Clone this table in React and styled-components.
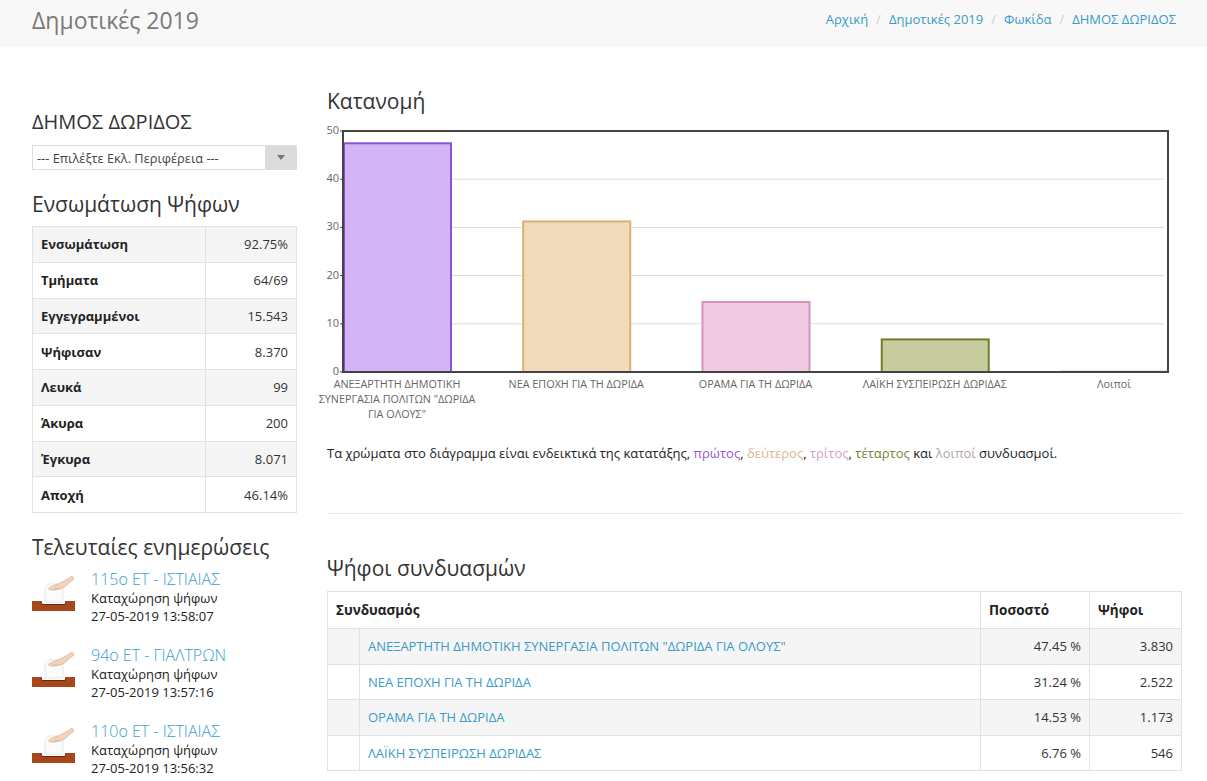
import React from 'react';
import styled, { createGlobalStyle } from 'styled-components';

//////// DATA ////////

const stats = [
  ['Ενσωμάτωση', '92.75%'],
  ['Τμήματα', '64/69'],
  ['Εγγεγραμμένοι', '15.543'],
  ['Ψήφισαν', '8.370'],
  ['Λευκά', '99'],
  ['Άκυρα', '200'],
  ['Έγκυρα', '8.071'],
  ['Αποχή', '46.14%'],
];

const updates = [
  { title: '115ο ΕΤ - ΙΣΤΙΑΙΑΣ', date: '27-05-2019 13:58:07' },
  { title: '94ο ΕΤ - ΓΙΑΛΤΡΩΝ', date: '27-05-2019 13:57:16' },
  { title: '110ο ΕΤ - ΙΣΤΙΑΙΑΣ', date: '27-05-2019 13:56:32' },
];

const parties = [
  { name: 'ΑΝΕΞΑΡΤΗΤΗ ΔΗΜΟΤΙΚΗ ΣΥΝΕΡΓΑΣΙΑ ΠΟΛΙΤΩΝ "ΔΩΡΙΔΑ ΓΙΑ ΟΛΟΥΣ"', pct: 47.45, votes: '3.830' },
  { name: 'ΝΕΑ ΕΠΟΧΗ ΓΙΑ ΤΗ ΔΩΡΙΔΑ', pct: 31.24, votes: '2.522' },
  { name: 'ΟΡΑΜΑ ΓΙΑ ΤΗ ΔΩΡΙΔΑ', pct: 14.53, votes: '1.173' },
  { name: 'ΛΑΪΚΗ ΣΥΣΠΕΙΡΩΣΗ ΔΩΡΙΔΑΣ', pct: 6.76, votes: '546' },
];

const bars = [
  { lines: ['ΑΝΕΞΑΡΤΗΤΗ ΔΗΜΟΤΙΚΗ', 'ΣΥΝΕΡΓΑΣΙΑ ΠΟΛΙΤΩΝ "ΔΩΡΙΔΑ', 'ΓΙΑ ΟΛΟΥΣ"'], value: 47.45, fill: '#d3b4f6', stroke: '#8e52d0' },
  { lines: ['ΝΕΑ ΕΠΟΧΗ ΓΙΑ ΤΗ ΔΩΡΙΔΑ'], value: 31.24, fill: '#f1dbbb', stroke: '#d9b078' },
  { lines: ['ΟΡΑΜΑ ΓΙΑ ΤΗ ΔΩΡΙΔΑ'], value: 14.53, fill: '#f0cbe2', stroke: '#d592bb' },
  { lines: ['ΛΑΪΚΗ ΣΥΣΠΕΙΡΩΣΗ ΔΩΡΙΔΑΣ'], value: 6.76, fill: '#c7cc9f', stroke: '#737c2c' },
  { lines: ['Λοιποί'], value: 0.05, fill: '#dddddd', stroke: '#999999' },
];

//////// CHART ////////

const PLOT_LEFT = 16;
const PLOT_RIGHT = 841;
const PLOT_TOP = 11;
const PLOT_BOTTOM = 252;
const UNIT = (PLOT_BOTTOM - PLOT_TOP) / 50;
const BAR_W = 108;
const BAR_STEP = 179.25;

const BarChart = () => (
  <ChartSvg width="855" height="310" viewBox="0 0 855 310">
    {[10, 20, 30, 40].map((v) => (
      <line key={v} x1={PLOT_LEFT} x2={PLOT_RIGHT - 4} y1={PLOT_BOTTOM - v * UNIT} y2={PLOT_BOTTOM - v * UNIT} stroke="#dcdcdc" strokeWidth="1" />
    ))}
    {[0, 10, 20, 30, 40, 50].map((v) => (
      <g key={v}>
        <text x="12" y={PLOT_BOTTOM - v * UNIT + 3} textAnchor="end" fontSize="11" fill="#666">{v}</text>
        <line x1="13" x2={PLOT_LEFT} y1={PLOT_BOTTOM - v * UNIT} y2={PLOT_BOTTOM - v * UNIT} stroke="#444" strokeWidth="1" />
      </g>
    ))}
    {bars.map((b, i) => {
      const x = PLOT_LEFT + i * BAR_STEP;
      const h = b.value * UNIT;
      return (
        <g key={i}>
          <rect x={x + 1} y={PLOT_BOTTOM - h} width={BAR_W - 1} height={h} fill={b.fill} stroke={b.stroke} strokeWidth="2" />
          {b.lines.map((line, j) => (
            <text key={j} x={x + BAR_W / 2} y={PLOT_BOTTOM + 16 + j * 15} textAnchor="middle" fontSize="10.8" fill="#666">{line}</text>
          ))}
        </g>
      );
    })}
    <rect x={PLOT_LEFT} y={PLOT_TOP} width={PLOT_RIGHT - PLOT_LEFT} height={PLOT_BOTTOM - PLOT_TOP} fill="none" stroke="#444" strokeWidth="2" />
  </ChartSvg>
);

//////// ICON ////////

const BallotIcon = () => (
  <svg width="43" height="35" viewBox="0 0 43 35">
    <path d="M13 13 C13 9 17 7 22 8 C27 7 31 9 31 13 L31 26 L13 26 Z" fill="#fbfbfb" stroke="#e2e2e2" strokeWidth="0.8" />
    <path d="M17 12 C19 10 23 9 26 8 C30 6 34 4 37 2 L40 0 L42 3 L38 6 C35 9 32 12 28 13 C25 14 21 14 19 14 C17 14 16 13 17 12 Z" fill="#f3d2bb" stroke="#d6a485" strokeWidth="0.6" />
    <path d="M21 13.5 L26 12.5" stroke="#d6a485" strokeWidth="0.6" />
    <path d="M0 25 L9 25 L10 28.5 L33 28.5 L34 25 L43 25 L43 35 L0 35 Z" fill="#a5461b" />
    <path d="M9 25 L10 28.5 L33 28.5 L34 25" fill="none" stroke="#6e2a0c" strokeWidth="1" />
  </svg>
);

//////// PAGE ////////

const App = () => (
  <>
    <GlobalStyle />
    <Header>
      <SiteTitle>Δημοτικές 2019</SiteTitle>
      <Breadcrumbs>
        {['Αρχική', 'Δημοτικές 2019', 'Φωκίδα', 'ΔΗΜΟΣ ΔΩΡΙΔΟΣ'].map((c, i) => (
          <React.Fragment key={c}>
            {i > 0 && <Sep>/</Sep>}
            <Crumb>{c}</Crumb>
          </React.Fragment>
        ))}
      </Breadcrumbs>
    </Header>

    <Main>
      <Sidebar>
        <MunicipalityTitle>ΔΗΜΟΣ ΔΩΡΙΔΟΣ</MunicipalityTitle>
        <Select>
          <span>--- Επιλέξτε Εκλ. Περιφέρεια ---</span>
          <SelectArrow><Caret /></SelectArrow>
        </Select>

        <SideHeading>Ενσωμάτωση Ψήφων</SideHeading>
        <StatsTable>
          <tbody>
            {stats.map(([label, value]) => (
              <tr key={label}>
                <th>{label}</th>
                <td>{value}</td>
              </tr>
            ))}
          </tbody>
        </StatsTable>

        <SideHeading $top={22}>Τελευταίες ενημερώσεις</SideHeading>
        <UpdateList>
          {updates.map((u) => (
            <UpdateItem key={u.title}>
              <IconWrap><BallotIcon /></IconWrap>
              <div>
                <UpdateTitle>{u.title}</UpdateTitle>
                <UpdateLine>Καταχώρηση ψήφων</UpdateLine>
                <UpdateLine>{u.date}</UpdateLine>
              </div>
            </UpdateItem>
          ))}
        </UpdateList>
      </Sidebar>

      <Content>
        <SectionTitle $top={43}>Κατανομή</SectionTitle>
        <BarChart />
        <Note>
          Τα χρώματα στο διάγραμμα είναι ενδεικτικά της κατατάξης, <Hue $c="#9656d2">πρώτος</Hue>,{' '}
          <Hue $c="#d8b98c">δεύτερος</Hue>, <Hue $c="#d39fc5">τρίτος</Hue>, <Hue $c="#7b8233">τέταρτος</Hue> και{' '}
          <Hue $c="#b3a3a8">λοιποί</Hue> συνδυασμοί.
        </Note>
        <Divider />
        <SectionTitle $top={42}>Ψήφοι συνδυασμών</SectionTitle>
        <VotesTable>
          <colgroup>
            <col style={{ width: 32 }} />
            <col />
            <col style={{ width: 109 }} />
            <col style={{ width: 92 }} />
          </colgroup>
          <thead>
            <tr>
              <th colSpan={2}>Συνδυασμός</th>
              <th>Ποσοστό</th>
              <th>Ψήφοι</th>
            </tr>
          </thead>
          <tbody>
            {parties.map((p) => (
              <tr key={p.name}>
                <td></td>
                <td><PartyLink>{p.name}</PartyLink></td>
                <td className="num">{p.pct.toFixed(2)} %</td>
                <td className="num">{p.votes}</td>
              </tr>
            ))}
          </tbody>
        </VotesTable>
      </Content>
    </Main>
  </>
);

const GlobalStyle = createGlobalStyle`
  body {
    margin: 0;
    background: #fff;
    font-family: "Open Sans", "Noto Sans", sans-serif;
    color: #222;
  }
  svg text {
    font-family: "Open Sans", "Noto Sans", sans-serif;
  }
`;

const Header = styled.header`
  height: 46px;
  background: #f8f8f8;
  border-bottom: 1px solid #f1f1f1;
  display: flex;
  align-items: center;
  justify-content: space-between;
  padding: 0 31px 0 32px;
  box-sizing: border-box;
`;

const SiteTitle = styled.div`
  font-size: 23px;
  font-weight: 400;
  color: #7a7a7a;
  margin-top: -6px;
`;

const Breadcrumbs = styled.nav`
  display: flex;
  align-items: center;
  font-size: 13px;
  margin-top: -7px;
`;

const Crumb = styled.span`
  color: #3a9bc8;
`;

const Sep = styled.span`
  color: #ccc;
  padding: 0 8px;
`;

const Main = styled.main`
  display: grid;
  grid-template-columns: 265px 855px;
  column-gap: 30px;
  padding: 0 25px 0 32px;
`;

const Sidebar = styled.aside``;

const Content = styled.section``;

const MunicipalityTitle = styled.h3`
  margin: 65px 0 12px;
  font-size: 20px;
  line-height: 22px;
  font-weight: 400;
  color: #333;
`;

const Select = styled.div`
  height: 25px;
  border: 1px solid #ddd;
  box-sizing: border-box;
  display: flex;
  align-items: center;
  justify-content: space-between;
  padding-left: 4px;
  font-size: 12.8px;
  color: #444;
`;

const SelectArrow = styled.div`
  width: 31px;
  height: 100%;
  background: #dcdcdc;
  display: flex;
  align-items: center;
  justify-content: center;
`;

const Caret = styled.span`
  width: 0;
  height: 0;
  border-left: 4px solid transparent;
  border-right: 4px solid transparent;
  border-top: 5px solid #777;
`;

const SideHeading = styled.h3`
  margin: ${(p) => p.$top || 22}px 0 10px;
  font-size: 21px;
  line-height: 24px;
  font-weight: 400;
  color: #333;
`;

const StatsTable = styled.table`
  width: 265px;
  border-collapse: collapse;
  font-size: 13px;
  tr {
    height: 35.75px;
  }
  tr:nth-child(odd) {
    background: #f5f5f5;
  }
  th, td {
    border: 1px solid #e2e2e2;
    padding: 0 8px;
  }
  th {
    width: 156px;
    text-align: left;
    font-weight: 700;
    color: #222;
  }
  td {
    text-align: right;
    color: #333;
  }
`;

const UpdateList = styled.div`
  display: flex;
  flex-direction: column;
  gap: 20px;
`;

const UpdateItem = styled.div`
  display: flex;
  align-items: flex-start;
`;

const IconWrap = styled.div`
  width: 59px;
  flex-shrink: 0;
  padding-top: 7px;
`;

const UpdateTitle = styled.div`
  font-size: 16px;
  line-height: 20px;
  font-weight: 300;
  color: #3aa0cf;
`;

const UpdateLine = styled.div`
  font-size: 13px;
  line-height: 18px;
  color: #222;
`;

const SectionTitle = styled.h3`
  margin: ${(p) => p.$top}px 0 7px;
  font-size: 21px;
  line-height: 24px;
  font-weight: 400;
  color: #333;
`;

const ChartSvg = styled.svg`
  display: block;
  overflow: visible;
`;

const Note = styled.p`
  margin: 13px 0 0;
  font-size: 13px;
  line-height: 20px;
  color: #222;
`;

const Hue = styled.span`
  color: ${(p) => p.$c};
`;

const Divider = styled.hr`
  margin: 50px 0 0;
  border: 0;
  border-top: 1px solid #e8e8e8;
`;

const VotesTable = styled.table`
  width: 855px;
  table-layout: fixed;
  border-collapse: collapse;
  font-size: 13px;
  margin-top: 11px;
  th, td {
    border: 1px solid #e2e2e2;
    padding: 0 8px;
  }
  thead tr {
    height: 37px;
  }
  th {
    text-align: left;
    font-weight: 700;
    font-size: 13.5px;
    color: #222;
  }
  tbody tr {
    height: 35.5px;
  }
  tbody tr:nth-child(odd) {
    background: #f5f5f5;
  }
  td.num {
    text-align: right;
    color: #333;
  }
`;

const PartyLink = styled.span`
  color: #3a9bc8;
`;

export default App;
